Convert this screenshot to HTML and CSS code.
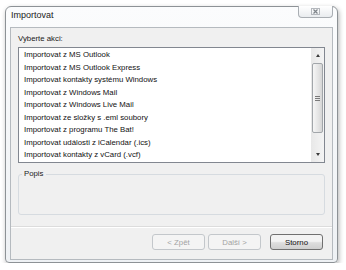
FILE: index.html
```html
<!DOCTYPE html>
<html lang="cs">
  <head>
    <meta charset="UTF-8" />
    <title>Importovat</title>
    <link rel="stylesheet" href="styles.css">
  </head>
  <body>
    <div class="window">
      <div class="titlebar">
        <span class="title">Importovat</span>
        <div class="close">
          <svg width="9" height="7" viewBox="0 0 9 7">
            <rect x="0.5" y="0.5" width="8" height="6" fill="none" stroke="#b4b8bd" />
            <path d="M2.5 1.5 L6.5 5.5 M6.5 1.5 L2.5 5.5" stroke="#7e848a" stroke-width="1.2" />
          </svg>
        </div>
      </div>

      <div class="panel">
        <div class="main">
          <div class="label">Vyberte akci:</div>

          <div class="listbox">
            <ul class="items">
              <li>Importovat z MS Outlook</li>
              <li>Importovat z MS Outlook Express</li>
              <li>Importovat kontakty systému Windows</li>
              <li>Importovat z Windows Mail</li>
              <li>Importovat z Windows Live Mail</li>
              <li>Importovat ze složky s .eml soubory</li>
              <li>Importovat z programu The Bat!</li>
              <li>Importovat události z iCalendar (.ics)</li>
              <li>Importovat kontakty z vCard (.vcf)</li>
            </ul>
            <div class="scrollbar">
              <div class="arrow"><span class="tri-up"></span></div>
              <div class="track">
                <div class="thumb"><span class="grip"></span></div>
              </div>
              <div class="arrow"><span class="tri-down"></span></div>
            </div>
          </div>

          <fieldset class="groupbox">
            <legend>Popis</legend>
          </fieldset>
        </div>

        <div class="footer">
          <button disabled>&lt; Zpět</button>
          <button disabled>Další &gt;</button>
          <button class="primary">Storno</button>
        </div>
      </div>
    </div>
  </body>
</html>
```

FILE: styles.css
```css
body {
  margin: 0;
  background: #ffffff;
  font-family: "Liberation Sans", Arial, sans-serif;
  font-size: 7.8px;
  color: #1a1a1a;
}

.window {
  box-sizing: border-box;
  display: flex;
  flex-direction: column;
  width: 333px;
  height: 257px;
  margin: 6px 0 0 5px;
  padding: 0 4px 2px 4px;
  border: 1px solid #8d9296;
  border-radius: 6px 6px 4px 4px;
  background: linear-gradient(#fbfcfd, #eef1f4);
  box-shadow: 1px 2px 5px rgba(0, 0, 0, 0.3);
}

.titlebar {
  display: flex;
  height: 20px;
}

.title {
  padding: 3px 0 0 1px;
  line-height: 10px;
  font-size: 9px;
  color: #222;
}

.close {
  display: flex;
  align-items: center;
  justify-content: center;
  margin-left: auto;
  margin-top: -1px;
  width: 33px;
  height: 11px;
  border: 1px solid #a9aeb3;
  border-top: none;
  border-radius: 0 0 4px 4px;
  background: linear-gradient(#ffffff, #e9ecef);
}

.panel {
  flex: 1;
  display: flex;
  flex-direction: column;
  background: #f0f0f0;
  border: 1px solid #b5babf;
}

.main {
  flex: 1;
  padding: 0 7px;
}

.label {
  padding-top: 5px;
  margin-bottom: 2px;
  line-height: 12px;
}

.listbox {
  box-sizing: border-box;
  display: flex;
  height: 116px;
  border: 1px solid #828790;
  background: #ffffff;
}

.items {
  flex: 1;
  margin: 0;
  padding: 1px 0 0 5px;
  list-style: none;
  line-height: 12.5px;
  color: #111;
}

.scrollbar {
  display: flex;
  flex-direction: column;
  width: 13px;
  background: linear-gradient(90deg, #e8e8e8, #f4f4f4);
}

.arrow {
  display: flex;
  align-items: center;
  justify-content: center;
  height: 15px;
}

.tri-up,
.tri-down {
  width: 0;
  height: 0;
  border-left: 2.5px solid transparent;
  border-right: 2.5px solid transparent;
}

.tri-up {
  border-bottom: 3px solid #3c3c3c;
}

.tri-down {
  border-top: 3px solid #3c3c3c;
}

.track {
  flex: 1;
}

.thumb {
  box-sizing: border-box;
  display: flex;
  align-items: center;
  justify-content: center;
  height: 70px;
  margin: 0 1px;
  border: 1px solid #a2a6aa;
  border-radius: 2px;
  background: linear-gradient(90deg, #f6f6f6, #e4e4e4 60%, #d6d6d6);
}

.grip {
  width: 5px;
  height: 5px;
  background: repeating-linear-gradient(#7a7a7a 0 1px, transparent 1px 2px);
}

.groupbox {
  box-sizing: border-box;
  height: 45px;
  margin: 7px 0 0;
  padding: 0;
  border: 1px solid #d6dbe0;
  border-radius: 3px;
}

.groupbox legend {
  margin-left: 3px;
  padding: 0 2px;
  line-height: 8px;
}

.footer {
  display: flex;
  justify-content: flex-end;
  gap: 3px;
  height: 33px;
  box-sizing: border-box;
  padding: 7px 9px 0;
  border-top: 1px solid #dcdcdc;
  box-shadow: inset 0 1px #ffffff;
}

.footer button {
  width: 53px;
  height: 16px;
  padding: 0;
  font-family: inherit;
  font-size: 7.8px;
  border: 1px solid #c3c7cb;
  border-radius: 3px;
  background: #f4f4f4;
  color: #a3a3a3;
}

.footer .primary {
  margin-left: 6px;
  border-color: #707070;
  background: linear-gradient(#f3f3f3 45%, #dedede 55%, #cfcfcf);
  color: #111;
}
```
